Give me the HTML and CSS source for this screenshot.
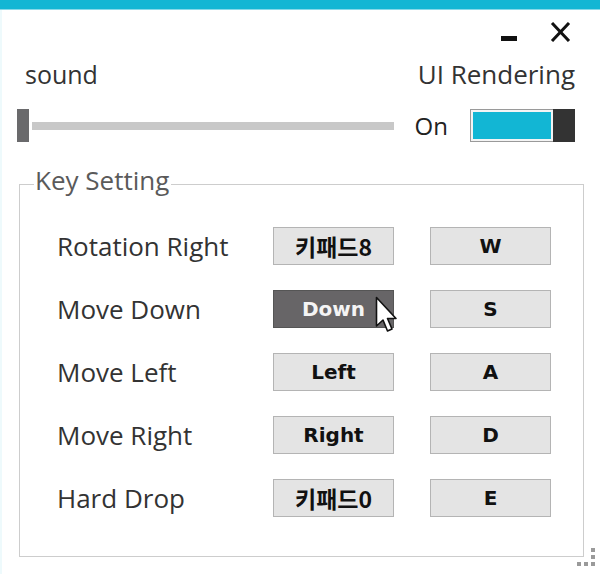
FILE: index.html
```html
<!DOCTYPE html>
<html>
<head>
<meta charset="utf-8">
<link rel="stylesheet" href="styles.css">
</head>
<body>
<div class="window">
  <div class="titlebar"></div>
  <div class="controls">
    <span class="min"></span>
    <svg class="close" width="21" height="20" viewBox="0 0 21 20"><path d="M2 1 L19 19 M19 1 L2 19" stroke="#111" stroke-width="3" fill="none"/></svg>
  </div>
  <div class="labels">
    <span class="lbl sound">sound</span>
    <span class="lbl ui">UI Rendering</span>
  </div>
  <div class="sliders">
    <div class="slider">
      <span class="thumb"></span>
      <span class="track"></span>
    </div>
    <div class="toggle-wrap">
      <span class="on">On</span>
      <div class="toggle"><span class="fill"></span><span class="knob"></span></div>
    </div>
  </div>
  <fieldset class="group">
    <legend>Key Setting</legend>
    <div class="grid">
      <span class="name">Rotation Right</span>
      <button class="key kr">키패드8</button>
      <button class="key">W</button>
      <span class="name">Move Down</span>
      <button class="key active">Down
        <svg class="cursor" width="26" height="40" viewBox="0 0 26 40"><path d="M1.5 1.5 L1.5 30 L8 24 L12.5 35 L17 33 L12.5 22.5 L21 22.5 Z" fill="#fff" stroke="#111" stroke-width="1.6" stroke-linejoin="round"/></svg>
      </button>
      <button class="key">S</button>
      <span class="name">Move Left</span>
      <button class="key">Left</button>
      <button class="key">A</button>
      <span class="name">Move Right</span>
      <button class="key">Right</button>
      <button class="key">D</button>
      <span class="name">Hard Drop</span>
      <button class="key kr">키패드0</button>
      <button class="key">E</button>
    </div>
  </fieldset>
  <div class="grip">
    <span></span><span></span><span></span><span></span><span></span>
  </div>
</div>
</body>
</html>
```

FILE: styles.css
```css
* { box-sizing: border-box; }
html, body {
  margin: 0;
  padding: 0;
  background: #fff;
}
body {
  width: 600px;
  height: 574px;
  overflow: hidden;
  font-family: "Open Sans", "Noto Sans CJK KR", sans-serif;
  color: #222;
}
.window {
  position: relative;
  width: 600px;
  height: 574px;
  border-left: 2px solid #eefafc;
}
.titlebar {
  height: 10px;
  margin-left: -2px;
  background: #12b6d4;
  border-bottom: 1px solid #86d9e9;
}
.controls {
  height: 42px;
  display: flex;
  justify-content: flex-end;
  align-items: flex-start;
  padding-right: 29px;
}
.min {
  width: 16px;
  height: 5px;
  background: #111;
  margin-top: 26px;
  margin-right: 33px;
}
.close {
  margin-top: 12px;
}
.labels {
  height: 44px;
  display: flex;
  justify-content: space-between;
  padding: 0 25px 0 23px;
}
.lbl {
  line-height: 44px;
  color: #333;
}
.sound { font-size: 25px; }
.ui { font-size: 26px; }
.sliders {
  margin-top: 13px;
  height: 33px;
  display: flex;
  justify-content: space-between;
  padding: 0 25px 0 15px;
}
.slider {
  display: flex;
  align-items: center;
  gap: 3px;
}
.thumb {
  width: 12px;
  height: 33px;
  background: #6a6a6c;
}
.track {
  width: 362px;
  height: 8px;
  background: #c8c8c8;
}
.toggle-wrap {
  display: flex;
  align-items: center;
  gap: 22px;
}
.on {
  font-size: 24px;
  color: #222;
}
.toggle {
  width: 105px;
  height: 33px;
  border: 1px solid #9a9a9a;
  display: flex;
  padding: 2px 0 2px 2px;
  background: #f4f4f4;
}
.fill {
  flex: 1;
  background: #12b6d4;
}
.knob {
  width: 22px;
  margin: -3px -1px -3px 2px;
  background: #333;
}
.group {
  margin: 23px 16px 0 17px;
  height: 392px;
  padding: 0;
  border: 1px solid #cdcdcd;
}
.group legend {
  margin-left: 14px;
  padding: 0 2px 9px 1px;
  font-size: 26px;
  line-height: 30px;
  color: #5a5a5a;
}
.grid {
  margin: 23px 0 0 37px;
  display: grid;
  grid-template-columns: 180px 121px 121px;
  grid-auto-rows: 38px;
  column-gap: 36px;
  row-gap: 25px;
  align-items: center;
}
.name {
  font-size: 26px;
  color: #333;
}
.key {
  position: relative;
  height: 38px;
  margin: 0;
  padding: 0;
  border: 1px solid #b4b4b4;
  background: #e4e4e4;
  font-family: "DejaVu Sans", sans-serif;
  font-weight: 700;
  font-size: 20px;
  color: #111;
}
.key.kr {
  font-family: "Noto Sans CJK KR", sans-serif;
  font-size: 23px;
}
.key.active {
  background: #676567;
  border-color: #555;
  color: #f4f4f4;
}
.cursor {
  position: absolute;
  left: 101px;
  top: 5px;
}
.grip {
  position: absolute;
  right: 5px;
  bottom: 8px;
  display: grid;
  grid-template-columns: repeat(3, 4px);
  grid-template-rows: repeat(3, 4px);
  gap: 3px;
}
.grip span {
  background: #9a9a9a;
}
.grip span:nth-child(1) { grid-column: 3; grid-row: 1; }
.grip span:nth-child(2) { grid-column: 3; grid-row: 2; }
.grip span:nth-child(3) { grid-column: 1; grid-row: 3; }
.grip span:nth-child(4) { grid-column: 2; grid-row: 3; }
.grip span:nth-child(5) { grid-column: 3; grid-row: 3; }
```
